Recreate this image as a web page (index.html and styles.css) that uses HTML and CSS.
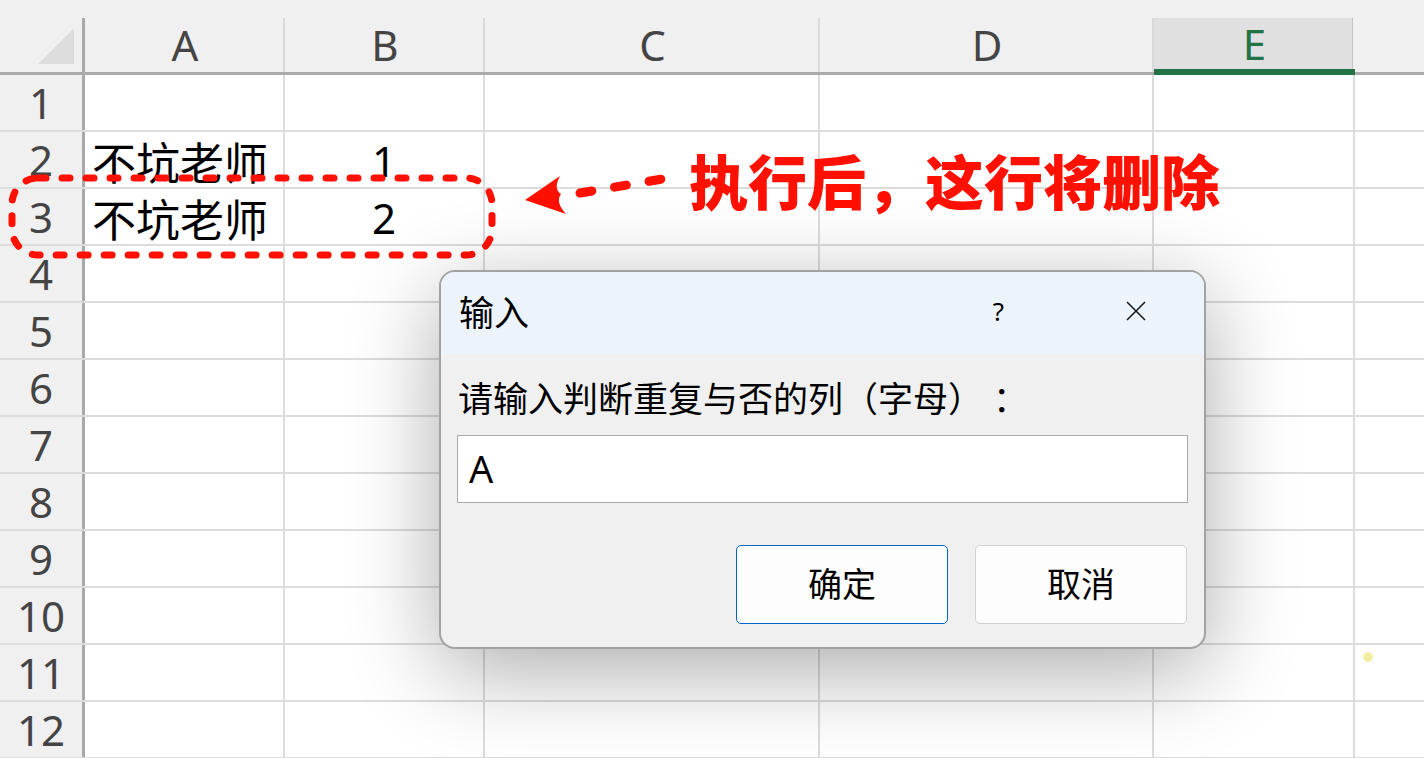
FILE: index.html
```html
<!DOCTYPE html>
<html lang="zh-CN">
<head>
<meta charset="utf-8">
<title>Excel 输入</title>
<link rel="stylesheet" href="styles.css">
</head>
<body>
<div class="page">
  <div class="sheet">
    <div class="h corner"><svg class="tri" width="36" height="36" viewBox="0 0 36 36"><polygon points="36,0 36,36 0,36" fill="#dcdcdc"/></svg></div>
    <div class="h">A</div>
    <div class="h">B</div>
    <div class="h">C</div>
    <div class="h">D</div>
    <div class="h sel">E</div>
    <div class="h last"></div>

    <div class="r">1</div><div class="c"></div><div class="c"></div><div class="c"></div><div class="c"></div><div class="c"></div><div class="c last"></div>
    <div class="r">2</div><div class="c txt">不坑老师</div><div class="c num">1</div><div class="c"></div><div class="c"></div><div class="c"></div><div class="c last"></div>
    <div class="r">3</div><div class="c txt">不坑老师</div><div class="c num">2</div><div class="c"></div><div class="c"></div><div class="c"></div><div class="c last"></div>
    <div class="r">4</div><div class="c"></div><div class="c"></div><div class="c"></div><div class="c"></div><div class="c"></div><div class="c last"></div>
    <div class="r">5</div><div class="c"></div><div class="c"></div><div class="c"></div><div class="c"></div><div class="c"></div><div class="c last"></div>
    <div class="r">6</div><div class="c"></div><div class="c"></div><div class="c"></div><div class="c"></div><div class="c"></div><div class="c last"></div>
    <div class="r">7</div><div class="c"></div><div class="c"></div><div class="c"></div><div class="c"></div><div class="c"></div><div class="c last"></div>
    <div class="r">8</div><div class="c"></div><div class="c"></div><div class="c"></div><div class="c"></div><div class="c"></div><div class="c last"></div>
    <div class="r">9</div><div class="c"></div><div class="c"></div><div class="c"></div><div class="c"></div><div class="c"></div><div class="c last"></div>
    <div class="r">10</div><div class="c"></div><div class="c"></div><div class="c"></div><div class="c"></div><div class="c"></div><div class="c last"></div>
    <div class="r">11</div><div class="c"></div><div class="c"></div><div class="c"></div><div class="c"></div><div class="c"></div><div class="c last"></div>
    <div class="r">12</div><div class="c"></div><div class="c"></div><div class="c"></div><div class="c"></div><div class="c"></div><div class="c last"></div>
  </div>

  <svg class="annot" width="1424" height="758" viewBox="0 0 1424 758">
    <rect x="12" y="178" width="480" height="77" rx="26" ry="26" fill="none" stroke="#ff1000" stroke-width="7" stroke-dasharray="8 16" stroke-linecap="round"/>
    <path d="M525,200 L560,176 Q553,189 561,194 Q555,202 566,214 Z" fill="#ff1000"/>
    <line x1="580" y1="193" x2="668" y2="178" stroke="#ff1000" stroke-width="9" stroke-linecap="round" stroke-dasharray="12 23"/>
  </svg>
  <div class="note">执行后，这行将删除</div>
  <div class="dot"></div>

  <div class="dialog">
    <div class="titlebar">
      <div class="title">输入</div>
      <div class="tbtn help">?</div>
      <div class="tbtn close"><svg width="20" height="20" viewBox="0 0 20 20"><path d="M1,1 L19,19 M19,1 L1,19" stroke="#1a1a1a" stroke-width="1.6" fill="none"/></svg></div>
    </div>
    <div class="body">
      <div class="label">请输入判断重复与否的列<span class="fw open">（</span>字母<span class="fw close-p">）</span><span class="fw colon">：</span></div>
      <div class="input">A</div>
      <div class="buttons">
        <div class="btn primary">确定</div>
        <div class="btn">取消</div>
      </div>
    </div>
  </div>
</div>
</body>
</html>
```

FILE: styles.css
```css
* { box-sizing: border-box; }
html, body {
  margin: 0;
  padding: 0;
  width: 1424px;
  height: 758px;
  overflow: hidden;
  background: #ffffff;
  font-family: "Noto Sans", "Noto Sans CJK SC", sans-serif;
}
.page {
  position: relative;
  width: 1424px;
  height: 758px;
}
.sheet {
  display: grid;
  grid-template-columns: 85px 200px 200px 335px 334px 201px 69px;
  grid-template-rows: 75px repeat(12, 57px);
  width: 1424px;
}
.h {
  background: #f0f0f0 linear-gradient(#dadada, #dadada) right 18px / 2px calc(100% - 18px) no-repeat;
  border-bottom: 3px solid #ababab;
  color: #444;
  font-size: 42px;
  line-height: 54px;
  padding-top: 18px;
  text-align: center;
}
.h.corner {
  position: relative;
  background: #f0f0f0 linear-gradient(#a9a9a9, #a9a9a9) right 18px / 3px calc(100% - 18px) no-repeat;
}
.tri {
  position: absolute;
  left: 38px;
  top: 28px;
}
.h.sel {
  color: #217346;
  background: #f0f0f0 linear-gradient(#e0e0e0, #e0e0e0) 0 18px / 100% calc(100% - 18px) no-repeat;
  border-bottom: 6px solid #217346;
  line-height: 51px;
  box-shadow: inset -2px 18px 0 #f0f0f0, inset -3px 0 0 #c4c4c4;
}
.h.last { background: #f0f0f0; }
.r {
  background: #f0f0f0 linear-gradient(#a9a9a9, #a9a9a9) right top / 3px 100% no-repeat;
  border-bottom: 2px solid #dcdcdc;
  color: #444;
  font-size: 42px;
  line-height: 55px;
  text-align: center;
  padding-right: 3px;
}
.c {
  border-right: 2px solid #dcdcdc;
  border-bottom: 2px solid #dcdcdc;
  color: #000;
  font-size: 44px;
  line-height: 55px;
  white-space: nowrap;
}
.c.last { border-right: none; }
.c.txt {
  padding-left: 7px;
  padding-top: 2px;
  font-family: "Noto Sans CJK SC", sans-serif;
  font-size: 44px;
}
.c.num {
  text-align: center;
  font-size: 42px;
  padding-top: 1px;
}
.annot {
  position: absolute;
  left: 0;
  top: 0;
  pointer-events: none;
}
.note {
  position: absolute;
  left: 689px;
  top: 148px;
  font-family: "Noto Sans CJK SC", sans-serif;
  font-weight: 900;
  font-size: 59px;
  line-height: 1.1;
  color: #ff1000;
  white-space: nowrap;
}
.dot {
  position: absolute;
  left: 1363px;
  top: 652px;
  width: 10px;
  height: 10px;
  border-radius: 50%;
  background: #f3eea0;
}
.dialog {
  position: absolute;
  left: 439px;
  top: 270px;
  width: 767px;
  height: 379px;
  border: 2px solid #a2a2a2;
  border-radius: 16px;
  background: #f0f0f0;
  overflow: hidden;
  box-shadow: 0 22px 90px rgba(0, 0, 0, 0.33);
  font-family: "Noto Sans CJK SC", sans-serif;
  color: #000;
  display: flex;
  flex-direction: column;
}
.titlebar {
  height: 82px;
  background: #ecf3fa;
  display: flex;
  align-items: center;
}
.title {
  flex: 1;
  padding-left: 18px;
  font-size: 35px;
  line-height: 40px;
  padding-bottom: 4px;
}
.tbtn {
  width: 137px;
  height: 82px;
  display: flex;
  align-items: center;
  justify-content: center;
}
.help {
  font-family: "Noto Sans", sans-serif;
  font-size: 26px;
  padding-bottom: 4px;
}
.close { padding-bottom: 4px; }
.body {
  flex: 1;
  padding: 21px 16px 0 16px;
  display: flex;
  flex-direction: column;
}
.label {
  font-size: 35px;
  line-height: 43px;
  padding-left: 1px;
  white-space: nowrap;
}
.fw {
  display: inline-block;
  width: 1em;
}
.fw.open { text-align: right; }
.fw.close-p { text-align: left; }
.fw.colon { text-align: left; padding-left: 10px; }
.input {
  margin-top: 17px;
  height: 68px;
  width: 731px;
  background: #fff;
  border: 1px solid #a8a8a8;
  font-family: "Noto Sans", sans-serif;
  font-size: 38px;
  line-height: 64px;
  padding-left: 11px;
}
.buttons {
  margin-top: 42px;
  display: flex;
  justify-content: flex-end;
  gap: 27px;
  padding-right: 1px;
}
.btn {
  width: 212px;
  height: 79px;
  background: #fdfdfd;
  border: 1px solid #d0d0d0;
  border-radius: 5px;
  font-size: 34px;
  line-height: 74px;
  text-align: center;
}
.btn.primary { border-color: #0067c0; }
```
